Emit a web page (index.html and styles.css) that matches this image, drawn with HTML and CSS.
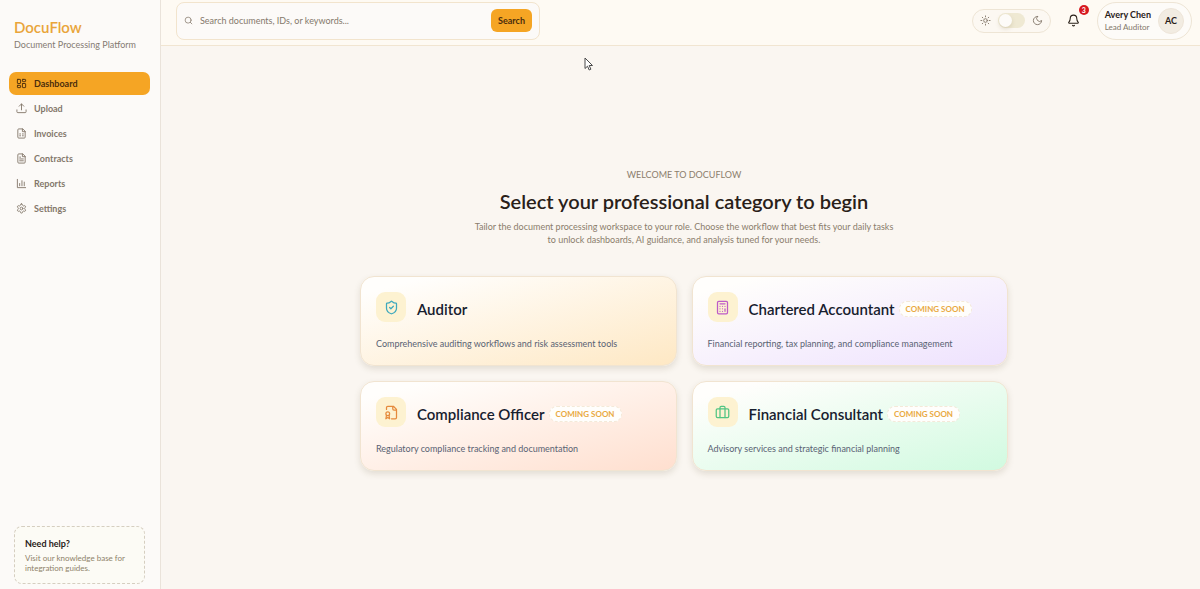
FILE: index.html
```
<!DOCTYPE html>
<html lang="en">
<head>
<meta charset="utf-8">
<meta name="viewport" content="width=device-width, initial-scale=1">
<title>DocuFlow</title>
<link rel="stylesheet" href="styles.css">
</head>
<body>
<div class="app">
  <aside class="sidebar">
    <div class="brand">
      <div class="brand-name">DocuFlow</div>
      <div class="brand-tagline">Document Processing Platform</div>
    </div>
    <nav class="nav" aria-label="Main">
      <a class="nav-link active" href="#dashboard"><svg class="icon" viewBox="0 0 24 24"><rect x="3" y="3" width="7" height="9" rx="1"/><rect x="14" y="3" width="7" height="5" rx="1"/><rect x="14" y="12" width="7" height="9" rx="1"/><rect x="3" y="16" width="7" height="5" rx="1"/></svg>Dashboard</a>
      <a class="nav-link" href="#upload"><svg class="icon" viewBox="0 0 24 24"><path d="M7 7l5-5 5 5M12 2v13M2 15v4a2 2 0 0 0 2 2h16a2 2 0 0 0 2-2v-4"/></svg>Upload</a>
      <a class="nav-link" href="#invoices"><svg class="icon" viewBox="0 0 24 24"><path d="M14 2H6a2 2 0 0 0-2 2v16a2 2 0 0 0 2 2h12a2 2 0 0 0 2-2V8zM14 2v6h6M8 13h2M14 13h2M8 17h2M14 17h2"/></svg>Invoices</a>
      <a class="nav-link" href="#contracts"><svg class="icon" viewBox="0 0 24 24"><path d="M14 2H6a2 2 0 0 0-2 2v16a2 2 0 0 0 2 2h12a2 2 0 0 0 2-2V8zM14 2v6h6M8 9h2M8 13h8M8 17h8"/></svg>Contracts</a>
      <a class="nav-link" href="#reports"><svg class="icon" viewBox="0 0 24 24"><path d="M3 3v18h18M8 17v-5M13 17V6M18 17V9"/></svg>Reports</a>
      <a class="nav-link" href="#settings"><svg class="icon" viewBox="0 0 24 24"><path d="M12.2 2h-.4a2 2 0 0 0-2 2v.2a2 2 0 0 1-1 1.7l-.4.3a2 2 0 0 1-2 0l-.2-.1a2 2 0 0 0-2.7.7l-.2.4a2 2 0 0 0 .7 2.7l.2.1a2 2 0 0 1 1 1.7v.6a2 2 0 0 1-1 1.7l-.2.1a2 2 0 0 0-.7 2.7l.2.4a2 2 0 0 0 2.7.7l.2-.1a2 2 0 0 1 2 0l.4.3a2 2 0 0 1 1 1.7v.2a2 2 0 0 0 2 2h.4a2 2 0 0 0 2-2v-.2a2 2 0 0 1 1-1.7l.4-.3a2 2 0 0 1 2 0l.2.1a2 2 0 0 0 2.7-.7l.2-.4a2 2 0 0 0-.7-2.7l-.2-.1a2 2 0 0 1-1-1.7v-.6a2 2 0 0 1 1-1.7l.2-.1a2 2 0 0 0 .7-2.7l-.2-.4a2 2 0 0 0-2.7-.7l-.2.1a2 2 0 0 1-2 0l-.4-.3a2 2 0 0 1-1-1.7V4a2 2 0 0 0-2-2z"/><circle cx="12" cy="12" r="3"/></svg>Settings</a>
    </nav>
    <section class="help">
      <h2 class="help-title">Need help?</h2>
      <p class="help-text">Visit our knowledge base for integration guides.</p>
    </section>
  </aside>

  <div class="content">
    <header class="topbar">
      <form class="search" role="search">
        <svg class="icon search-icon" viewBox="0 0 24 24"><circle cx="11" cy="11" r="8"/><path d="M21 21l-4.300-4.300"/></svg>
        <input class="search-input" type="search" aria-label="Search documents" placeholder="Search documents, IDs, or keywords...">
        <button class="search-button" type="button">Search</button>
      </form>
      <div class="actions">
        <div class="theme">
          <svg class="icon" viewBox="0 0 24 24"><circle cx="12" cy="12" r="4"/><path d="M12 2v2M12 20v2M4.900 4.900l1.400 1.400M17.700 17.700l1.400 1.400M2 12h2M20 12h2M6.300 17.700l-1.400 1.400M19.100 4.900l-1.400 1.400"/></svg>
          <input class="switch" type="checkbox" role="switch" aria-label="Dark mode">
          <svg class="icon" viewBox="0 0 24 24"><path d="M12 3a6 6 0 0 0 9 9 9 9 0 1 1-9-9z"/></svg>
        </div>
        <button class="bell" type="button" aria-label="Notifications">
          <svg class="icon" viewBox="0 0 24 24"><path d="M10.300 21a2 2 0 0 0 3.400 0M3.300 15.300A1 1 0 0 0 4 17h16a1 1 0 0 0 .7-1.700C19.400 14 18 12.500 18 8A6 6 0 0 0 6 8c0 4.500-1.400 6-2.700 7.300z"/></svg>
          <span class="bell-count">3</span>
        </button>
        <button class="profile" type="button">
          <span class="profile-text"><span class="profile-name">Avery Chen</span><span class="profile-role">Lead Auditor</span></span>
          <span class="avatar">AC</span>
        </button>
      </div>
    </header>

    <main class="main">
      <div class="intro">
        <p class="eyebrow">WELCOME TO DOCUFLOW</p>
        <h1 class="title">Select your professional category to begin</h1>
        <p class="lead">Tailor the document processing workspace to your role. Choose the workflow that best fits your daily tasks to unlock dashboards, AI guidance, and analysis tuned for your needs.</p>
      </div>
      <div class="cards">
        <a class="card auditor" href="#auditor">
          <span class="card-head">
            <span class="card-icon"><svg class="icon" viewBox="0 0 24 24"><path d="M20 13c0 5-3.500 7.500-7.700 9a1 1 0 0 1-.6 0C7.500 20.500 4 18 4 13V6a1 1 0 0 1 1-1c2 0 4.500-1.200 6.200-2.700a1.200 1.200 0 0 1 1.600 0C14.500 3.800 17 5 19 5a1 1 0 0 1 1 1zM9 12l2 2 4-4"/></svg></span>
            <span class="card-title">Auditor</span>
          </span>
          <span class="card-text">Comprehensive auditing workflows and risk assessment tools</span>
        </a>
        <a class="card accountant" href="#accountant">
          <span class="card-head">
            <span class="card-icon"><svg class="icon" viewBox="0 0 24 24"><rect x="4" y="2" width="16" height="20" rx="2"/><path d="M8 6h8M16 14v4M16 10h.01M12 10h.01M8 10h.01M12 14h.01M8 14h.01M12 18h.01M8 18h.01"/></svg></span>
            <span class="card-title">Chartered Accountant</span>
            <span class="badge">COMING SOON</span>
          </span>
          <span class="card-text">Financial reporting, tax planning, and compliance management</span>
        </a>
        <a class="card compliance" href="#compliance">
          <span class="card-head">
            <span class="card-icon"><svg class="icon" viewBox="0 0 24 24"><path d="M4 7V4a2 2 0 0 1 2-2h9l5 5v13a2 2 0 0 1-2 2h-6M14 2v4a2 2 0 0 0 2 2h4"/><circle cx="6" cy="14" r="3"/><path d="M4 16.500L3 22l3-2 3 2-1-5.500"/></svg></span>
            <span class="card-title">Compliance Officer</span>
            <span class="badge">COMING SOON</span>
          </span>
          <span class="card-text">Regulatory compliance tracking and documentation</span>
        </a>
        <a class="card consultant" href="#consultant">
          <span class="card-head">
            <span class="card-icon"><svg class="icon" viewBox="0 0 24 24"><rect x="2" y="6" width="20" height="14" rx="2"/><path d="M16 20V4a2 2 0 0 0-2-2h-4a2 2 0 0 0-2 2v16"/></svg></span>
            <span class="card-title">Financial Consultant</span>
            <span class="badge">COMING SOON</span>
          </span>
          <span class="card-text">Advisory services and strategic financial planning</span>
        </a>
      </div>
    </main>
  </div>
</div>
<svg class="pointer" viewBox="0 0 10 14" aria-hidden="true"><path d="M1 1v10.500l2.500-2.300 1.700 3.800 1.700-.8-1.700-3.700h3.300z"/></svg>
</body>
</html>
```
FILE: styles.css
```
* { box-sizing: border-box; }

body {
  margin: 0;
  background: #faf6f1;
  color: #292018;
  font-family: Lato, "Open Sans", sans-serif;
  font-size: 9px;
}

h1, h2, p { margin: 0; }
a { color: inherit; text-decoration: none; }
button, input { font: inherit; color: inherit; }

.icon {
  width: 11px;
  height: 11px;
  flex: none;
  fill: none;
  stroke: currentColor;
  stroke-width: 2;
  stroke-linecap: round;
  stroke-linejoin: round;
}

.app { display: flex; min-height: 100vh; }

.sidebar {
  display: flex;
  flex-direction: column;
  flex: none;
  width: 161px;
  padding: 18px 9px 5px;
  background: #fcfaf8;
  border-right: 1px solid #eae3da;
}

.brand { padding: 0 5px; white-space: nowrap; }
.brand-name { color: #e9a53a; font-size: 15px; font-weight: 600; line-height: 19px; }
.brand-tagline { color: #857a73; line-height: 16px; }

.nav { display: flex; flex-direction: column; gap: 2px; margin-top: 19px; }
.nav-link {
  display: flex;
  align-items: center;
  gap: 7px;
  height: 23px;
  padding: 0 7px;
  margin-right: 1px;
  border-radius: 7px;
  color: #83776a;
  font-weight: 700;
}
.nav-link.active { background: #f5a524; color: #4b2d0c; }

.help {
  margin: auto 6px 0 5px;
  padding: 10px;
  border: 1px dashed #d5cec0;
  border-radius: 8px;
  background: #fcfbf5;
}
.help-title { font-size: 9px; font-weight: 700; line-height: 14px; }
.help-text { color: #8e8269; font-size: 8px; line-height: 10px; margin-top: 2px; }

.content { display: flex; flex: 1; flex-direction: column; min-width: 0; }

.topbar {
  display: flex;
  justify-content: space-between;
  align-items: center;
  height: 46px;
  padding: 0 8px 4px 15px;
  background: #fefaf3;
  border-bottom: 1px solid #f1e5d1;
}

.search {
  display: flex;
  align-items: center;
  gap: 7px;
  width: 364px;
  height: 38px;
  padding: 0 7px;
  border: 1px solid #f2e4cd;
  border-radius: 8px;
  background: #fcfaf8;
  color: #85796c;
}
.search-icon { width: 9px; height: 9px; }
.search-input { flex: 1; min-width: 0; padding: 0; border: 0; outline: 0; background: none; }
.search-input::placeholder { color: #85796c; opacity: 1; }
.search-button {
  height: 23px;
  padding: 0 7px;
  border: 0;
  border-radius: 6px;
  background: #f5a524;
  color: #4b2d0c;
  font-weight: 700;
}

.actions { display: flex; align-items: center; }
.theme {
  display: flex;
  align-items: center;
  gap: 7px;
  height: 24px;
  padding: 0 7px;
  border: 1px solid #eee5d5;
  border-radius: 12px;
  background: #fcf8f2;
  color: #83776a;
}
.switch {
  display: flex;
  align-items: center;
  appearance: none;
  width: 27px;
  height: 15px;
  margin: 0;
  padding: 0 1px;
  border-radius: 8px;
  background: #efe9d3;
}
.switch::before {
  content: "";
  width: 13px;
  height: 13px;
  border-radius: 50%;
  background: #fdfbf8;
  box-shadow: 0 2px 4px #80704033;
}
.switch:checked { justify-content: flex-end; }

.bell {
  position: relative;
  display: flex;
  align-items: center;
  justify-content: center;
  width: 24px;
  height: 24px;
  margin: 0 11px;
  padding: 0;
  border: 0;
  background: none;
}
.bell .icon { width: 13px; height: 13px; }
.bell-count {
  position: absolute;
  top: -4px;
  right: -3px;
  width: 10px;
  height: 10px;
  border-radius: 50%;
  background: #d7191f;
  color: #fff;
  font-size: 7px;
  font-weight: 700;
  line-height: 10px;
}

.profile {
  display: flex;
  align-items: center;
  gap: 7px;
  height: 38px;
  padding: 0 7px;
  border: 1px solid #eee5d5;
  border-radius: 19px;
  background: #fdfbf8;
  text-align: left;
  white-space: nowrap;
}
.profile-text { display: flex; flex-direction: column; }
.profile-name { font-weight: 700; line-height: 12px; }
.profile-role { color: #83776a; font-size: 8px; line-height: 12px; }
.avatar {
  width: 26px;
  height: 26px;
  border: 1px solid #eee5d9;
  border-radius: 50%;
  background: #f2ece2;
  font-weight: 700;
  line-height: 24px;
  text-align: center;
}

.main {
  display: flex;
  flex: 1;
  flex-direction: column;
  align-items: center;
  justify-content: center;
  gap: 30px;
  padding: 12px 15px 7px 22px;
}

.intro { display: flex; flex-direction: column; align-items: center; text-align: center; }
.eyebrow { color: #8b7d6c; line-height: 12px; }
.title { margin-top: 6px; font-size: 20px; font-weight: 600; line-height: 28px; }
.lead { max-width: 424px; margin-top: 5px; color: #8b7d6c; line-height: 13px; }

.cards {
  display: grid;
  grid-template-columns: 1fr 1fr;
  gap: 15px;
  width: 100%;
  max-width: 648px;
}
.card {
  display: flex;
  flex-direction: column;
  gap: 15px;
  padding: 15px;
  border: 1px solid #f1e4d1;
  border-radius: 14px;
  background: linear-gradient(165deg, #fffefc 10%, var(--tint));
  box-shadow: 0 3px 6px #60503026;
}
.auditor { --tint: #fee8c4; --accent: #3ea9bd; }
.accountant { --tint: #eee2fe; --accent: #bd5bc8; }
.compliance { --tint: #ffdfcf; --accent: #e58a3c; }
.consultant { --tint: #d1fae0; --accent: #52c583; }

.card-head { display: flex; align-items: center; white-space: nowrap; }
.card-icon {
  display: flex;
  align-items: center;
  justify-content: center;
  width: 30px;
  height: 30px;
  margin-right: 11px;
  border-radius: 9px;
  background: #fdf2d1;
  color: var(--accent);
}
.card-icon .icon { width: 15px; height: 15px; }
.card-title { padding-top: 4px; color: #17202e; font-size: 15px; font-weight: 600; line-height: 20px; }
.badge {
  margin: 4px 0 0 4px;
  padding: 0 6px;
  border: 1px dashed #f4e9d8;
  border-radius: 8px;
  background: #fffefc;
  color: #e9a93f;
  font-size: 8px;
  font-weight: 700;
  line-height: 14px;
}
.card-text { color: #596273; line-height: 13px; }

.pointer {
  position: absolute;
  left: 584px;
  top: 57px;
  width: 10px;
  height: 14px;
  fill: #fff;
  stroke: #4a4a4a;
  pointer-events: none;
}
```
